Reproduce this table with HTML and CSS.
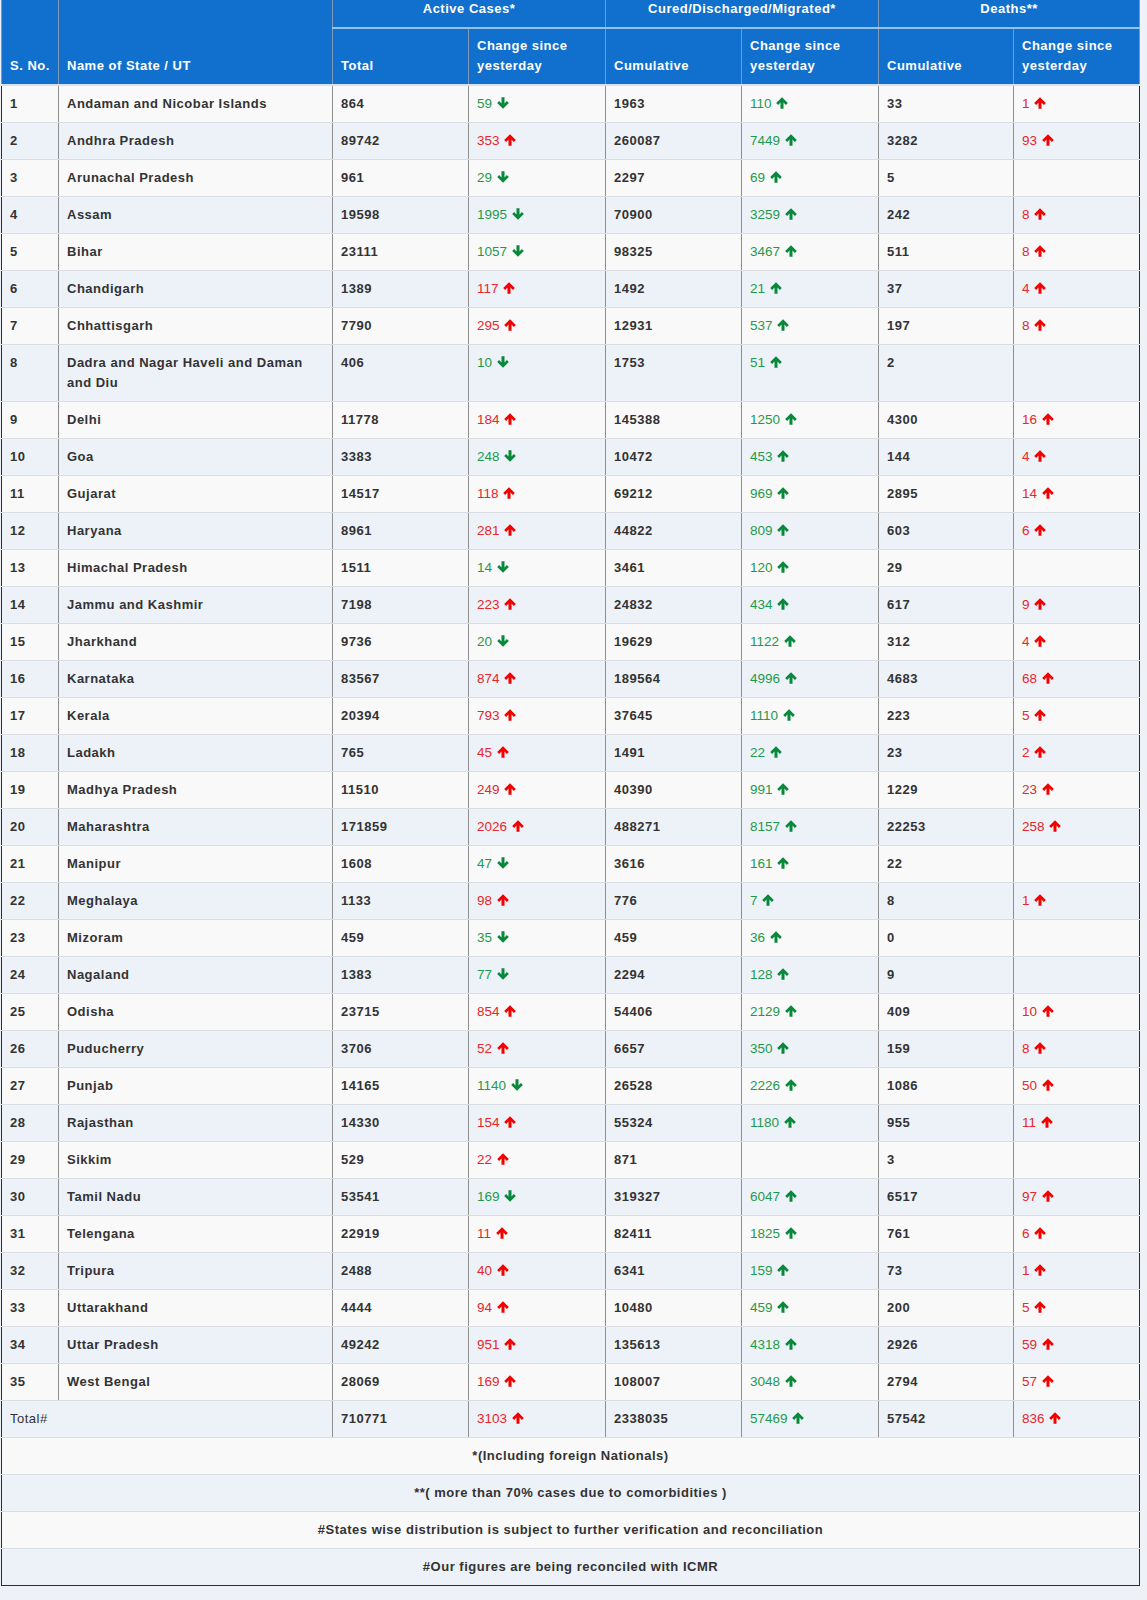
FILE: index.html
```html
<!DOCTYPE html>
<html lang="en">
<head>
<meta charset="utf-8">
<title>State-wise COVID-19 status</title>
<link rel="stylesheet" href="styles.css">
</head>
<body>
<svg class="defs" width="0" height="0" aria-hidden="true">
  <symbol id="up" viewBox="0 0 12 12"><path d="M6 0.3 L11.8 6.1 L9.9 8 L7.5 5.6 V11.8 H4.5 V5.6 L2.1 8 L0.2 6.1 Z"/></symbol>
  <symbol id="down" viewBox="0 0 12 12"><path d="M6 11.7 L11.8 5.9 L9.9 4 L7.5 6.4 V0.2 H4.5 V6.4 L2.1 4 L0.2 5.9 Z"/></symbol>
</svg>
<table class="stats">
  <colgroup>
    <col class="c-no"><col class="c-name"><col class="c-num"><col class="c-chg"><col class="c-num"><col class="c-chg"><col class="c-num"><col class="c-last">
  </colgroup>
  <thead>
    <tr class="grp">
      <th rowspan="2" class="bottom">S. No.</th>
      <th rowspan="2" class="bottom">Name of State / UT</th>
      <th colspan="2" class="group">Active Cases*</th>
      <th colspan="2" class="group">Cured/Discharged/Migrated*</th>
      <th colspan="2" class="group">Deaths**</th>
    </tr>
    <tr class="sub">
      <th>Total</th>
      <th>Change since yesterday</th>
      <th>Cumulative</th>
      <th>Change since yesterday</th>
      <th>Cumulative</th>
      <th>Change since yesterday</th>
    </tr>
  </thead>
  <tbody>
    <tr><td>1</td><td>Andaman and Nicobar Islands</td><td>864</td><td class="g">59 <svg class="ar"><use href="#down"/></svg></td><td>1963</td><td class="g">110 <svg class="ar"><use href="#up"/></svg></td><td>33</td><td class="r">1 <svg class="ar"><use href="#up"/></svg></td></tr>
    <tr><td>2</td><td>Andhra Pradesh</td><td>89742</td><td class="r">353 <svg class="ar"><use href="#up"/></svg></td><td>260087</td><td class="g">7449 <svg class="ar"><use href="#up"/></svg></td><td>3282</td><td class="r">93 <svg class="ar"><use href="#up"/></svg></td></tr>
    <tr><td>3</td><td>Arunachal Pradesh</td><td>961</td><td class="g">29 <svg class="ar"><use href="#down"/></svg></td><td>2297</td><td class="g">69 <svg class="ar"><use href="#up"/></svg></td><td>5</td><td></td></tr>
    <tr><td>4</td><td>Assam</td><td>19598</td><td class="g">1995 <svg class="ar"><use href="#down"/></svg></td><td>70900</td><td class="g">3259 <svg class="ar"><use href="#up"/></svg></td><td>242</td><td class="r">8 <svg class="ar"><use href="#up"/></svg></td></tr>
    <tr><td>5</td><td>Bihar</td><td>23111</td><td class="g">1057 <svg class="ar"><use href="#down"/></svg></td><td>98325</td><td class="g">3467 <svg class="ar"><use href="#up"/></svg></td><td>511</td><td class="r">8 <svg class="ar"><use href="#up"/></svg></td></tr>
    <tr><td>6</td><td>Chandigarh</td><td>1389</td><td class="r">117 <svg class="ar"><use href="#up"/></svg></td><td>1492</td><td class="g">21 <svg class="ar"><use href="#up"/></svg></td><td>37</td><td class="r">4 <svg class="ar"><use href="#up"/></svg></td></tr>
    <tr><td>7</td><td>Chhattisgarh</td><td>7790</td><td class="r">295 <svg class="ar"><use href="#up"/></svg></td><td>12931</td><td class="g">537 <svg class="ar"><use href="#up"/></svg></td><td>197</td><td class="r">8 <svg class="ar"><use href="#up"/></svg></td></tr>
    <tr><td>8</td><td>Dadra and Nagar Haveli and Daman and Diu</td><td>406</td><td class="g">10 <svg class="ar"><use href="#down"/></svg></td><td>1753</td><td class="g">51 <svg class="ar"><use href="#up"/></svg></td><td>2</td><td></td></tr>
    <tr><td>9</td><td>Delhi</td><td>11778</td><td class="r">184 <svg class="ar"><use href="#up"/></svg></td><td>145388</td><td class="g">1250 <svg class="ar"><use href="#up"/></svg></td><td>4300</td><td class="r">16 <svg class="ar"><use href="#up"/></svg></td></tr>
    <tr><td>10</td><td>Goa</td><td>3383</td><td class="g">248 <svg class="ar"><use href="#down"/></svg></td><td>10472</td><td class="g">453 <svg class="ar"><use href="#up"/></svg></td><td>144</td><td class="r">4 <svg class="ar"><use href="#up"/></svg></td></tr>
    <tr><td>11</td><td>Gujarat</td><td>14517</td><td class="r">118 <svg class="ar"><use href="#up"/></svg></td><td>69212</td><td class="g">969 <svg class="ar"><use href="#up"/></svg></td><td>2895</td><td class="r">14 <svg class="ar"><use href="#up"/></svg></td></tr>
    <tr><td>12</td><td>Haryana</td><td>8961</td><td class="r">281 <svg class="ar"><use href="#up"/></svg></td><td>44822</td><td class="g">809 <svg class="ar"><use href="#up"/></svg></td><td>603</td><td class="r">6 <svg class="ar"><use href="#up"/></svg></td></tr>
    <tr><td>13</td><td>Himachal Pradesh</td><td>1511</td><td class="g">14 <svg class="ar"><use href="#down"/></svg></td><td>3461</td><td class="g">120 <svg class="ar"><use href="#up"/></svg></td><td>29</td><td></td></tr>
    <tr><td>14</td><td>Jammu and Kashmir</td><td>7198</td><td class="r">223 <svg class="ar"><use href="#up"/></svg></td><td>24832</td><td class="g">434 <svg class="ar"><use href="#up"/></svg></td><td>617</td><td class="r">9 <svg class="ar"><use href="#up"/></svg></td></tr>
    <tr><td>15</td><td>Jharkhand</td><td>9736</td><td class="g">20 <svg class="ar"><use href="#down"/></svg></td><td>19629</td><td class="g">1122 <svg class="ar"><use href="#up"/></svg></td><td>312</td><td class="r">4 <svg class="ar"><use href="#up"/></svg></td></tr>
    <tr><td>16</td><td>Karnataka</td><td>83567</td><td class="r">874 <svg class="ar"><use href="#up"/></svg></td><td>189564</td><td class="g">4996 <svg class="ar"><use href="#up"/></svg></td><td>4683</td><td class="r">68 <svg class="ar"><use href="#up"/></svg></td></tr>
    <tr><td>17</td><td>Kerala</td><td>20394</td><td class="r">793 <svg class="ar"><use href="#up"/></svg></td><td>37645</td><td class="g">1110 <svg class="ar"><use href="#up"/></svg></td><td>223</td><td class="r">5 <svg class="ar"><use href="#up"/></svg></td></tr>
    <tr><td>18</td><td>Ladakh</td><td>765</td><td class="r">45 <svg class="ar"><use href="#up"/></svg></td><td>1491</td><td class="g">22 <svg class="ar"><use href="#up"/></svg></td><td>23</td><td class="r">2 <svg class="ar"><use href="#up"/></svg></td></tr>
    <tr><td>19</td><td>Madhya Pradesh</td><td>11510</td><td class="r">249 <svg class="ar"><use href="#up"/></svg></td><td>40390</td><td class="g">991 <svg class="ar"><use href="#up"/></svg></td><td>1229</td><td class="r">23 <svg class="ar"><use href="#up"/></svg></td></tr>
    <tr><td>20</td><td>Maharashtra</td><td>171859</td><td class="r">2026 <svg class="ar"><use href="#up"/></svg></td><td>488271</td><td class="g">8157 <svg class="ar"><use href="#up"/></svg></td><td>22253</td><td class="r">258 <svg class="ar"><use href="#up"/></svg></td></tr>
    <tr><td>21</td><td>Manipur</td><td>1608</td><td class="g">47 <svg class="ar"><use href="#down"/></svg></td><td>3616</td><td class="g">161 <svg class="ar"><use href="#up"/></svg></td><td>22</td><td></td></tr>
    <tr><td>22</td><td>Meghalaya</td><td>1133</td><td class="r">98 <svg class="ar"><use href="#up"/></svg></td><td>776</td><td class="g">7 <svg class="ar"><use href="#up"/></svg></td><td>8</td><td class="r">1 <svg class="ar"><use href="#up"/></svg></td></tr>
    <tr><td>23</td><td>Mizoram</td><td>459</td><td class="g">35 <svg class="ar"><use href="#down"/></svg></td><td>459</td><td class="g">36 <svg class="ar"><use href="#up"/></svg></td><td>0</td><td></td></tr>
    <tr><td>24</td><td>Nagaland</td><td>1383</td><td class="g">77 <svg class="ar"><use href="#down"/></svg></td><td>2294</td><td class="g">128 <svg class="ar"><use href="#up"/></svg></td><td>9</td><td></td></tr>
    <tr><td>25</td><td>Odisha</td><td>23715</td><td class="r">854 <svg class="ar"><use href="#up"/></svg></td><td>54406</td><td class="g">2129 <svg class="ar"><use href="#up"/></svg></td><td>409</td><td class="r">10 <svg class="ar"><use href="#up"/></svg></td></tr>
    <tr><td>26</td><td>Puducherry</td><td>3706</td><td class="r">52 <svg class="ar"><use href="#up"/></svg></td><td>6657</td><td class="g">350 <svg class="ar"><use href="#up"/></svg></td><td>159</td><td class="r">8 <svg class="ar"><use href="#up"/></svg></td></tr>
    <tr><td>27</td><td>Punjab</td><td>14165</td><td class="g">1140 <svg class="ar"><use href="#down"/></svg></td><td>26528</td><td class="g">2226 <svg class="ar"><use href="#up"/></svg></td><td>1086</td><td class="r">50 <svg class="ar"><use href="#up"/></svg></td></tr>
    <tr><td>28</td><td>Rajasthan</td><td>14330</td><td class="r">154 <svg class="ar"><use href="#up"/></svg></td><td>55324</td><td class="g">1180 <svg class="ar"><use href="#up"/></svg></td><td>955</td><td class="r">11 <svg class="ar"><use href="#up"/></svg></td></tr>
    <tr><td>29</td><td>Sikkim</td><td>529</td><td class="r">22 <svg class="ar"><use href="#up"/></svg></td><td>871</td><td></td><td>3</td><td></td></tr>
    <tr><td>30</td><td>Tamil Nadu</td><td>53541</td><td class="g">169 <svg class="ar"><use href="#down"/></svg></td><td>319327</td><td class="g">6047 <svg class="ar"><use href="#up"/></svg></td><td>6517</td><td class="r">97 <svg class="ar"><use href="#up"/></svg></td></tr>
    <tr><td>31</td><td>Telengana</td><td>22919</td><td class="r">11 <svg class="ar"><use href="#up"/></svg></td><td>82411</td><td class="g">1825 <svg class="ar"><use href="#up"/></svg></td><td>761</td><td class="r">6 <svg class="ar"><use href="#up"/></svg></td></tr>
    <tr><td>32</td><td>Tripura</td><td>2488</td><td class="r">40 <svg class="ar"><use href="#up"/></svg></td><td>6341</td><td class="g">159 <svg class="ar"><use href="#up"/></svg></td><td>73</td><td class="r">1 <svg class="ar"><use href="#up"/></svg></td></tr>
    <tr><td>33</td><td>Uttarakhand</td><td>4444</td><td class="r">94 <svg class="ar"><use href="#up"/></svg></td><td>10480</td><td class="g">459 <svg class="ar"><use href="#up"/></svg></td><td>200</td><td class="r">5 <svg class="ar"><use href="#up"/></svg></td></tr>
    <tr><td>34</td><td>Uttar Pradesh</td><td>49242</td><td class="r">951 <svg class="ar"><use href="#up"/></svg></td><td>135613</td><td class="g">4318 <svg class="ar"><use href="#up"/></svg></td><td>2926</td><td class="r">59 <svg class="ar"><use href="#up"/></svg></td></tr>
    <tr><td>35</td><td>West Bengal</td><td>28069</td><td class="r">169 <svg class="ar"><use href="#up"/></svg></td><td>108007</td><td class="g">3048 <svg class="ar"><use href="#up"/></svg></td><td>2794</td><td class="r">57 <svg class="ar"><use href="#up"/></svg></td></tr>
    <tr class="total"><td colspan="2" class="total-label">Total#</td><td>710771</td><td class="r">3103 <svg class="ar"><use href="#up"/></svg></td><td>2338035</td><td class="g">57469 <svg class="ar"><use href="#up"/></svg></td><td>57542</td><td class="r">836 <svg class="ar"><use href="#up"/></svg></td></tr>
    <tr class="note"><td colspan="8">*(Including foreign Nationals)</td></tr>
    <tr class="note"><td colspan="8">**( more than 70% cases due to comorbidities )</td></tr>
    <tr class="note"><td colspan="8">#States wise distribution is subject to further verification and reconciliation</td></tr>
    <tr class="note last"><td colspan="8">#Our figures are being reconciled with ICMR</td></tr>
  </tbody>
</table>
</body>
</html>
```

FILE: styles.css
```css
html, body {
  margin: 0;
  padding: 0;
  background: #eef2f7;
}

body {
  padding-left: 1px;
  font-family: "Liberation Sans", Arial, sans-serif;
  font-size: 13px;
  color: #333;
}

.defs {
  position: absolute;
  width: 0;
  height: 0;
  overflow: hidden;
}

.stats {
  border-collapse: collapse;
  table-layout: fixed;
  width: 1138px;
  letter-spacing: 0.5px;
}

.c-no { width: 57px; }
.c-name { width: 274px; }
.c-num { width: 136px; }
.c-chg { width: 137px; }
.c-last { width: 126px; }
colgroup col:nth-child(7) { width: 135px; }

/* header */
.stats thead th {
  background: #1170cd;
  color: #fff;
  font-weight: bold;
  text-align: left;
  line-height: 20px;
  padding: 7px 8px 8px;
  vertical-align: bottom;
  border-left: 1px solid #7f98b3;
  border-right: 1px solid #7f98b3;
}

.stats thead tr.grp th.group {
  text-align: center;
  vertical-align: top;
  line-height: 18px;
  height: 18px;
  padding: 0 8px 9px;
  border-bottom: 2px solid #93c3ec;
}

.stats thead tr.sub th {
  border-bottom: 2px solid #d3e3f3;
}

.stats thead th.bottom {
  border-bottom: 2px solid #d3e3f3;
}

/* body */
.stats tbody td {
  padding: 8px 8px;
  line-height: 20px;
  vertical-align: top;
  font-weight: bold;
  border-top: 1px solid #dadde1;
  border-bottom: 1px solid #dadde1;
  border-left: 1px solid #8e8e8e;
  border-right: 1px solid #8e8e8e;
  overflow: hidden;
}

.stats tbody tr:nth-child(odd) td { background: #f9f9f9; }
.stats tbody tr:nth-child(even) td { background: #edf2f8; }

.stats tbody td:first-child { border-left-color: #2d2d2d; }
.stats tbody td:last-child { border-right-color: #2d2d2d; }
.stats tbody tr.last td { border-bottom-color: #2d2d2d; }

.stats tbody td.g,
.stats tbody td.r {
  font-weight: normal;
  letter-spacing: 0;
  font-size: 13.5px;
}
.stats tbody td.g { color: #1f9a4c; }
.stats tbody td.r { color: #e8262c; }

.ar {
  width: 12px;
  height: 12px;
  vertical-align: -1px;
  margin-left: 1px;
}
.g .ar { fill: #07883a; }
.r .ar { fill: #f40000; }

.stats tbody td.total-label {
  font-weight: normal;
}

.stats tbody tr.note td {
  text-align: center;
  font-weight: bold;
}
```
